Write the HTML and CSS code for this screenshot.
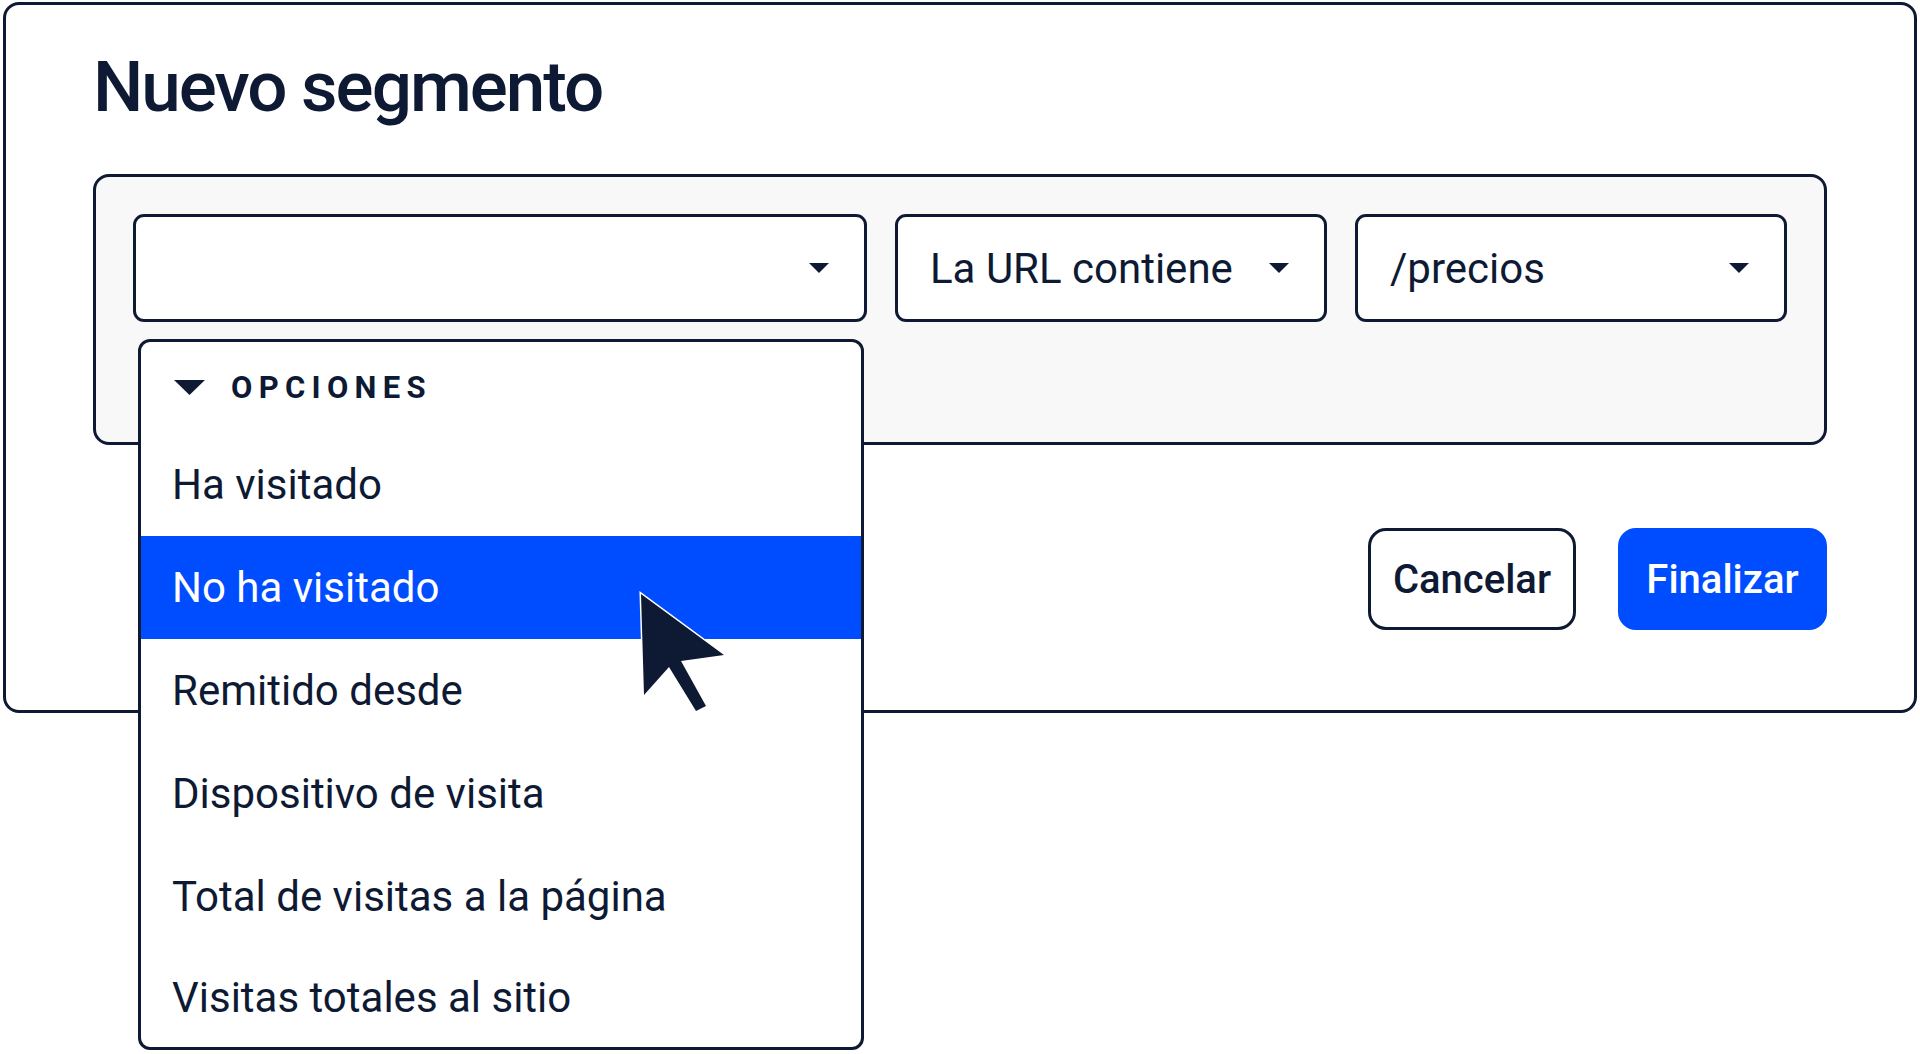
FILE: index.html
```html
<!DOCTYPE html>
<html lang="es">

<head>
    <meta charset="UTF-8">
    <meta name="viewport" content="width=device-width, initial-scale=1.0">
    <title>Nuevo segmento</title>
    <link rel="stylesheet" href="styles.css">
</head>

<body>
    <!-- Ventana del segmento -->
    <div class="modal">
        <h1 class="modal-title">Nuevo segmento</h1>

        <!-- Filtros -->
        <div class="filter-panel">
            <div class="select select-open">
                <span class="select-value"></span>
                <svg class="caret" width="20" height="10" viewBox="0 0 20 10"><path d="M0 0h20L10 10z" /></svg>

                <!-- Menú desplegable -->
                <div class="dropdown">
                    <div class="dropdown-header">
                        <svg class="header-caret" width="31" height="15" viewBox="0 0 31 15"><path d="M0 0h31L15.5 15z" /></svg>
                        <span>OPCIONES</span>
                    </div>
                    <div class="dropdown-item">Ha visitado</div>
                    <div class="dropdown-item active">
                        No ha visitado
                        <svg class="pointer" width="90" height="122" viewBox="-3 -3 90 122">
                            <path d="M0 0L3 101L28 73L55 117L65 112L40 67L83 61Z" />
                        </svg>
                    </div>
                    <div class="dropdown-item">Remitido desde</div>
                    <div class="dropdown-item">Dispositivo de visita</div>
                    <div class="dropdown-item">Total de visitas a la página</div>
                    <div class="dropdown-item">Visitas totales al sitio</div>
                </div>
            </div>
            <div class="select">
                <span class="select-value">La URL contiene</span>
                <svg class="caret" width="20" height="10" viewBox="0 0 20 10"><path d="M0 0h20L10 10z" /></svg>
            </div>
            <div class="select">
                <span class="select-value">/precios</span>
                <svg class="caret" width="20" height="10" viewBox="0 0 20 10"><path d="M0 0h20L10 10z" /></svg>
            </div>
        </div>

        <!-- Acciones -->
        <div class="actions">
            <button class="btn btn-outline">Cancelar</button>
            <button class="btn btn-primary">Finalizar</button>
        </div>
    </div>
</body>

</html>
```

FILE: styles.css
```css
* {
    margin: 0;
    padding: 0;
    box-sizing: border-box;
}

body {
    min-height: 100vh;
    padding: 2px 3px;
    background-color: #ffffff;
    font-family: Roboto, "Liberation Sans", sans-serif;
    color: #0e1a33;
}

/* ventana */
.modal {
    border: 3px solid #0e1a33;
    border-radius: 16px;
    padding: 0 87px 80px;
    background-color: #ffffff;
}

.modal-title {
    margin: 39px 0 44px;
    font-size: 71px;
    line-height: 86px;
    font-weight: 500;
    letter-spacing: -2px;
}

/* panel de filtros */
.filter-panel {
    display: grid;
    grid-template-columns: 734px 1fr 1fr;
    gap: 28px;
    padding: 37px 37px 120px;
    border: 3px solid #0e1a33;
    border-radius: 16px;
    background-color: #f8f8f8;
}

.select {
    display: flex;
    align-items: center;
    justify-content: space-between;
    height: 108px;
    padding: 0 35px 0 32px;
    border: 3px solid #0e1a33;
    border-radius: 11px;
    background-color: #ffffff;
    font-size: 42px;
}

.select-open {
    position: relative;
}

.caret path,
.header-caret path {
    fill: #0e1a33;
}

/* menú desplegable */
.dropdown {
    position: absolute;
    top: calc(100% + 20px);
    left: 2px;
    right: 0;
    border: 3px solid #0e1a33;
    border-radius: 12px;
    background-color: #ffffff;
    overflow: hidden;
    z-index: 2;
}

.dropdown-header {
    display: flex;
    align-items: center;
    gap: 26px;
    height: 91px;
    padding-left: 33px;
    font-size: 31px;
    font-weight: 700;
    letter-spacing: 6.3px;
}

.dropdown-item {
    position: relative;
    display: flex;
    align-items: center;
    height: 103px;
    padding-left: 31px;
    font-size: 42px;
}

.dropdown-item:last-child {
    height: 99px;
}

.dropdown-item.active {
    background-color: #004cff;
    color: #ffffff;
}

.pointer {
    position: absolute;
    top: 55px;
    left: 497px;
    z-index: 3;
}

.pointer path {
    fill: #0e1a33;
    stroke: #ffffff;
    stroke-width: 3;
    stroke-linejoin: miter;
    paint-order: stroke;
}

/* botones */
.actions {
    display: flex;
    justify-content: flex-end;
    gap: 42px;
    margin-top: 83px;
}

.btn {
    width: 208px;
    height: 102px;
    border: 3px solid #0e1a33;
    border-radius: 18px;
    background-color: #ffffff;
    font-family: inherit;
    font-size: 40px;
    font-weight: 500;
    color: #0e1a33;
    cursor: pointer;
}

.btn-primary {
    width: 209px;
    border-color: #004cff;
    background-color: #004cff;
    color: #ffffff;
}
```
